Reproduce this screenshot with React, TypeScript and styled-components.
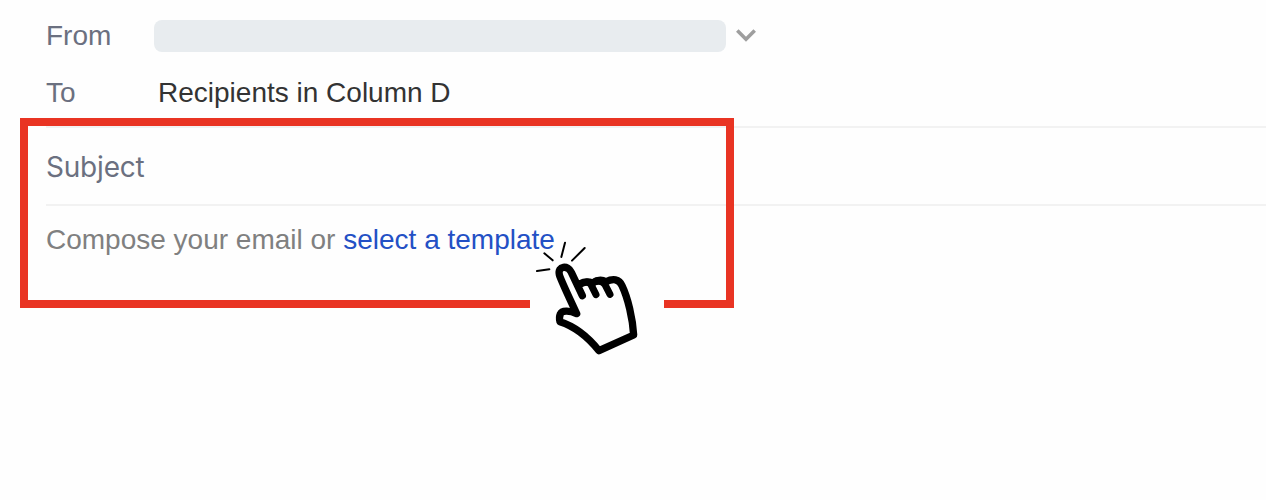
import styled, { createGlobalStyle } from "styled-components";

const GlobalStyle = createGlobalStyle`
  body {
    margin: 0;
    background: #fefefe;
    font-family: "Liberation Sans", Arial, sans-serif;
    font-size: 28px;
    line-height: 32px;
  }
`;

const Composer = styled.main`
  position: relative;
  box-sizing: border-box;
  height: 500px;
  padding: 20px 0 0 46px;
  overflow: hidden;
`;

const FieldRow = styled.div`
  display: flex;
  align-items: center;
  height: 32px;
`;

const RecipientRow = styled(FieldRow)`
  margin-top: 25px;
  padding-bottom: 17px;
`;

const Label = styled.span`
  width: 108px;
  flex: none;
  color: #6b7080;
`;

const SenderSelect = styled.div`
  display: flex;
  align-items: center;
  gap: 10px;
`;

const SenderValue = styled.div`
  width: 572px;
  height: 32px;
  border-radius: 8px;
  background: #e8ecef;
`;

const Recipients = styled.span`
  padding-left: 4px;
  color: #333;
`;

const SubjectRow = styled.div`
  box-sizing: border-box;
  height: 80px;
  padding-top: 23px;
  border: solid #f2f2f2;
  border-width: 2px 0;
  font-family: Inter, sans-serif;
  font-size: 28px;
  letter-spacing: -0.2px;
  color: #6b7080;
`;

const Body = styled.p`
  margin: 18px 0 0;
  color: #808080;
`;

const TemplateLink = styled.a`
  color: #2350c5;
`;

const Highlight = styled.div`
  position: absolute;
  box-sizing: border-box;
  left: 20px;
  top: 118px;
  width: 714px;
  height: 190px;
  border: 8px solid #e93423;
`;

const PointerPatch = styled.div`
  position: absolute;
  left: 530px;
  top: 260px;
  width: 134px;
  height: 96px;
  background: #fefefe;
`;

const Pointer = styled.svg`
  position: absolute;
  left: 520px;
  top: 230px;
`;

export default function App() {
  return (
    <>
      <GlobalStyle />
      <Composer>
        <FieldRow>
          <Label>From</Label>
          <SenderSelect>
            <SenderValue />
            <svg width="20" height="14" viewBox="0 0 20 14" fill="none" stroke="#9e9e9e" strokeWidth="3.6">
              <path d="M1.3 1.6 L10 10.3 L18.7 1.6" />
            </svg>
          </SenderSelect>
        </FieldRow>
        <RecipientRow>
          <Label>To</Label>
          <Recipients>Recipients in Column D</Recipients>
        </RecipientRow>
        <SubjectRow>Subject</SubjectRow>
        <Body>
          Compose your email or <TemplateLink>select a template</TemplateLink>
        </Body>
        <Highlight />
        <PointerPatch />
        <Pointer width="150" height="130" viewBox="0 0 450 390" fill="none" stroke="#000" strokeLinecap="round" strokeLinejoin="round">
          <path strokeWidth="6" d="M51 123 L88 118 M73 70 L98 91 M135 38 L124 81 M194 54 L156 92" />
          <path
            fill="#fefefe"
            strokeWidth="22"
            d="M187 197 L154 127 C144 104 112 108 118 134 C121 147 154 217 170 251 C151 242 126 239 121 252 C118 259 118 268 120 275 C167 290 206 323 237 362 L341 315 C338 265 324 205 306 167 C298 146 278 145 258 155 C246 149 231 150 217 159 C205 154 192 155 180 161"
          />
          <path strokeWidth="21" d="M180 163 C197 153 207 155 213 164 L228 194 M217 159 C235 150 248 152 255 164 L270 193" />
        </Pointer>
      </Composer>
    </>
  );
}
